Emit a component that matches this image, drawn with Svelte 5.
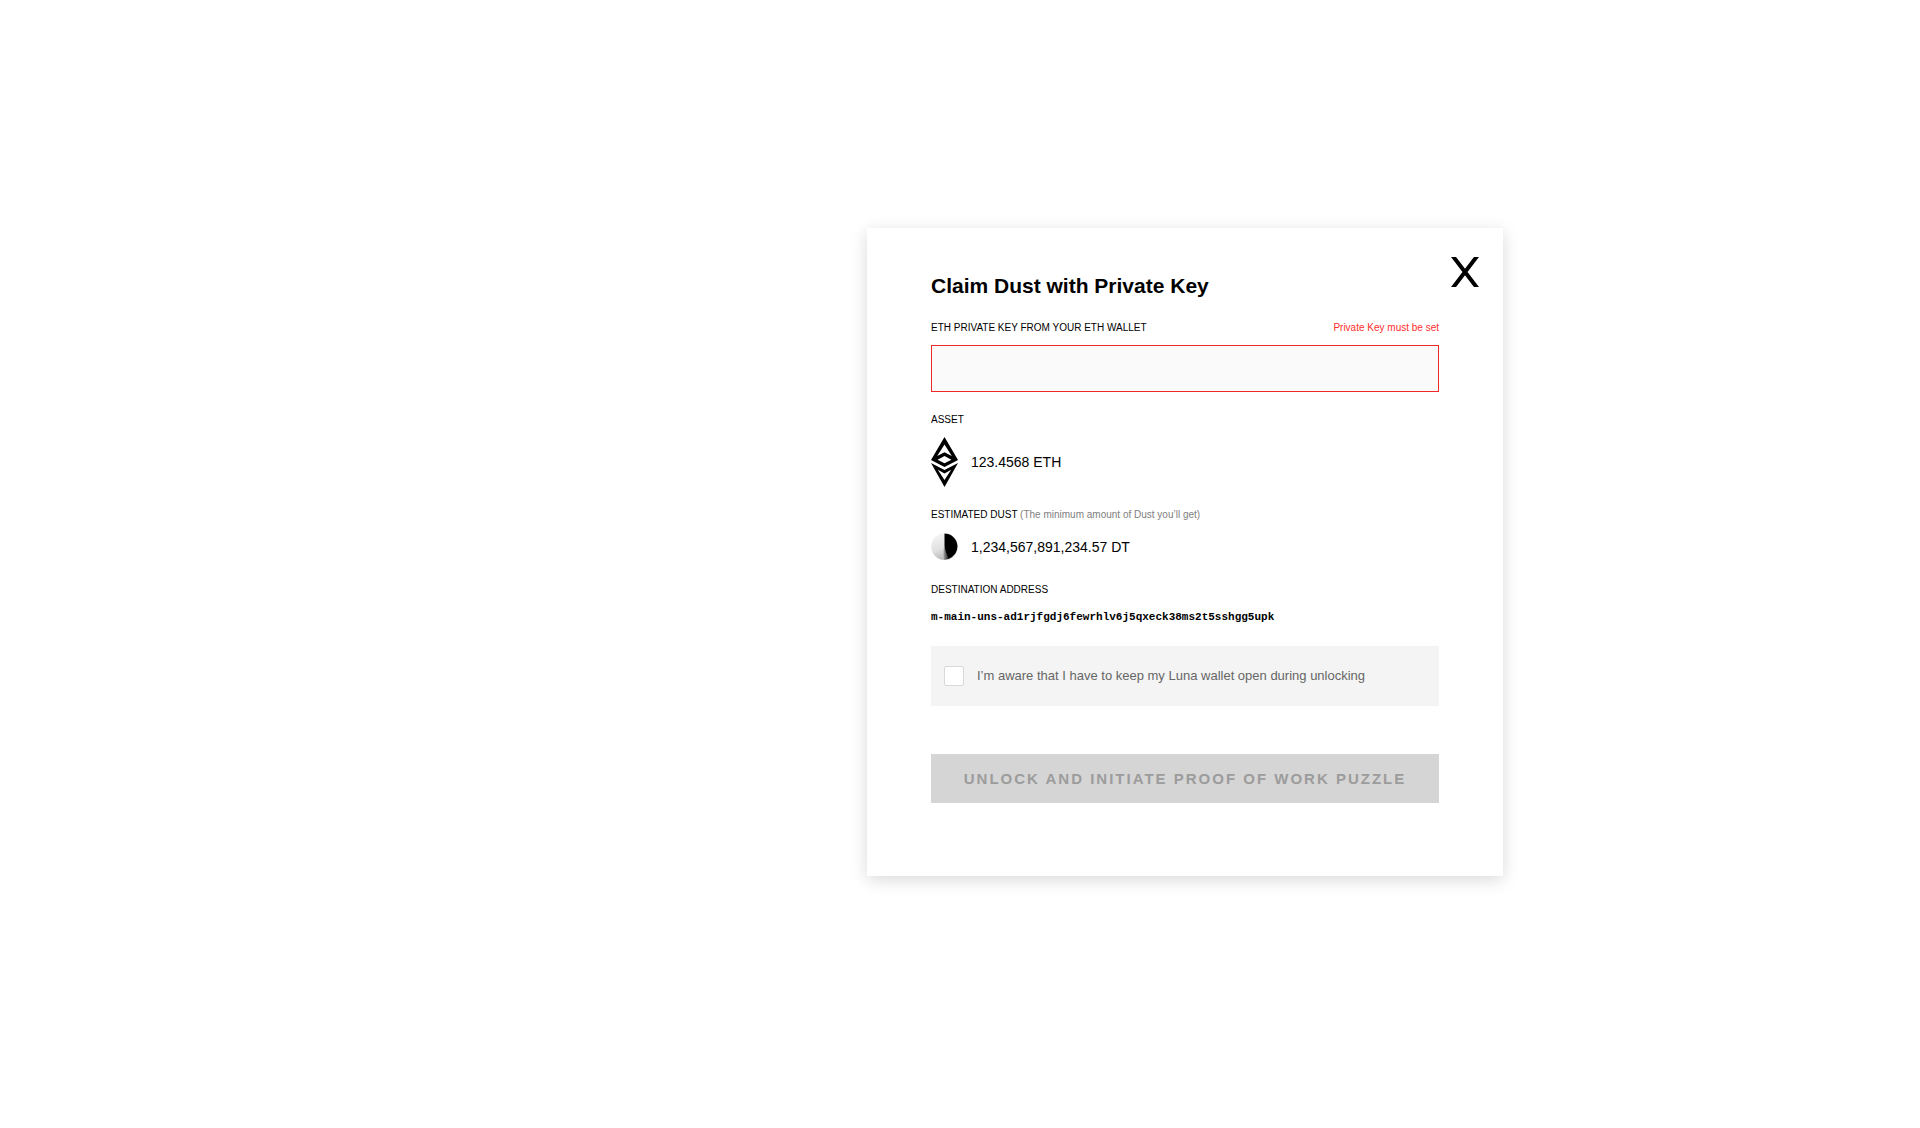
<script>
  let privateKey = $state('');
  let aware = $state(false);

  const asset = '123.4568 ETH';
  const dust = '1,234,567,891,234.57 DT';
  const address = 'm-main-uns-ad1rjfgdj6fewrhlv6j5qxeck38ms2t5sshgg5upk';
</script>

<div class="screen">
  <div class="dialog" role="dialog" aria-labelledby="dialog-title">
    <button class="close" type="button" aria-label="Close">
      <svg viewBox="0 0 28 30" width="28" height="30" aria-hidden="true">
        <path d="M1 -2L27 32M27 -2L1 32" fill="none" stroke="#000" stroke-width="4" />
      </svg>
    </button>

    <h1 id="dialog-title">Claim Dust with Private Key</h1>

    <div class="labels">
      <label class="caption" for="private-key">ETH PRIVATE KEY FROM YOUR ETH WALLET</label>
      <span class="error" id="key-error">Private Key must be set</span>
    </div>
    <input
      class="key"
      id="private-key"
      type="text"
      aria-invalid="true"
      aria-describedby="key-error"
      bind:value={privateKey}
    />

    <div class="caption">ASSET</div>
    <div class="amount asset">
      <svg viewBox="0 0 27 50" width="27" height="50" aria-hidden="true">
        <path
          fill="#000"
          fill-rule="evenodd"
          d="M13.5 0L27 23L13.5 30L0 23ZM13.5 7.4L6.2 19L13.5 15.2L20.8 19ZM13.5 19L6.6 22.8L13.5 26.2L20.4 22.8Z"
        />
        <path
          fill="#000"
          fill-rule="evenodd"
          d="M0 26L13.5 33L27 26L13.5 50ZM6.8 32.8L13.5 43L20.2 32.8L13.5 36.4Z"
        />
      </svg>
      <span>{asset}</span>
    </div>

    <div class="caption">
      ESTIMATED DUST <span class="note">(The minimum amount of Dust you’ll get)</span>
    </div>
    <div class="amount dust">
      <svg viewBox="0 0 27 27" width="27" height="27" aria-hidden="true">
        <defs>
          <linearGradient id="lit" x1="0.2" y1="0" x2="0.5" y2="1">
            <stop offset="0" stop-color="#f6f6f6" />
            <stop offset="0.6" stop-color="#e0e0e0" />
            <stop offset="1" stop-color="#b4b4b4" />
          </linearGradient>
          <linearGradient id="edge" x1="0" y1="0" x2="1" y2="0">
            <stop offset="0" stop-color="#aaa" />
            <stop offset="1" stop-color="#000" />
          </linearGradient>
        </defs>
        <circle cx="13.5" cy="13.5" r="13.3" fill="url(#lit)" />
        <path d="M13.5 0.5A13 13 0 0 1 17 26Q13.5 22 13.5 13.5Z" fill="#000" />
        <path d="M13.5 12Q14.5 21 18.5 25.6L13 27Q11.5 20 13.5 12Z" fill="url(#edge)" />
      </svg>
      <span>{dust}</span>
    </div>

    <div class="caption">DESTINATION ADDRESS</div>
    <div class="address">{address}</div>

    <label class="consent">
      <input type="checkbox" bind:checked={aware} />
      <span>I’m aware that I have to keep my Luna wallet open during unlocking</span>
    </label>

    <button class="submit" type="button" disabled>UNLOCK AND INITIATE PROOF OF WORK PUZZLE</button>
  </div>
</div>

<style>
  :global(body) {
    margin: 0;
    background: #fff;
  }

  .screen {
    box-sizing: border-box;
    min-height: 100vh;
    padding: 0 0 24px 450px;
    display: flex;
    align-items: center;
    justify-content: center;
    font-family: 'Liberation Sans', Arial, sans-serif;
    color: #000;
  }

  .dialog {
    position: relative;
    box-sizing: border-box;
    width: 100%;
    max-width: 636px;
    padding: 46px 64px 73px;
    background: #fff;
    box-shadow: 0 4px 16px rgba(0, 0, 0, 0.15);
  }

  .close {
    position: absolute;
    top: 29px;
    right: 24px;
    padding: 0;
    border: 0;
    background: none;
    cursor: pointer;
  }

  svg {
    display: block;
    flex: none;
  }

  h1 {
    margin: 0 0 22px;
    font-size: 21px;
    line-height: 24px;
    font-weight: 700;
  }

  .labels {
    display: flex;
    justify-content: space-between;
    gap: 16px;
  }

  .caption,
  .error {
    font-size: 10px;
    line-height: 16px;
  }

  .error {
    color: #ff2e2e;
  }

  .note {
    color: #808080;
  }

  .key {
    display: block;
    box-sizing: border-box;
    width: 100%;
    height: 47px;
    margin: 9px 0 20px;
    padding: 0 12px;
    border: 1px solid #f02828;
    border-radius: 0;
    background: #fafafa;
    font: inherit;
    font-size: 14px;
    outline: none;
  }

  .amount {
    display: flex;
    align-items: center;
    gap: 13px;
    font-size: 14px;
    line-height: 20px;
  }

  .asset {
    margin: 9px 0 20px;
  }

  .dust {
    margin: 10px 0 22px;
  }

  .address {
    margin: 9px 0 19px;
    font-family: 'Liberation Mono', monospace;
    font-size: 11px;
    line-height: 20px;
    font-weight: 700;
  }

  .consent {
    display: flex;
    align-items: center;
    gap: 13px;
    min-height: 60px;
    padding: 0 13px;
    margin-bottom: 48px;
    background: #f4f4f4;
    color: #666;
    font-size: 13px;
    line-height: 20px;
  }

  .consent input {
    appearance: none;
    box-sizing: border-box;
    flex: none;
    width: 20px;
    height: 20px;
    margin: 0;
    border: 1px solid #d9d9d9;
    border-radius: 2px;
    background: #fff;
  }

  .consent input:checked {
    background: #000;
  }

  .submit {
    display: block;
    box-sizing: border-box;
    width: 100%;
    min-height: 49px;
    padding: 0;
    border: 0;
    background: #d5d5d5;
    color: #9c9c9c;
    font: inherit;
    font-size: 15px;
    font-weight: 700;
    letter-spacing: 2px;
  }
</style>
